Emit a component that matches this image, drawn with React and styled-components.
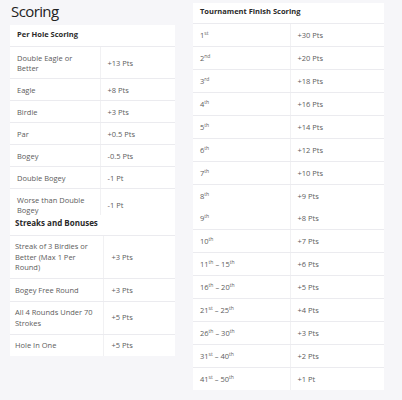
import styled, { createGlobalStyle } from "styled-components";

const GlobalStyle = createGlobalStyle`
  body {
    margin: 0;
    background-color: #f6f6f9;
    font-family: "Open Sans", "Liberation Sans", sans-serif;
    color: #5c5c5c;
  }
`;

const Page = styled.div`
  display: flex;
  align-items: flex-start;
  gap: 18px;
  padding: 3px 0 0 10px;
`;

const Column = styled.div`
  width: ${(props) => props.width}px;
  display: flex;
  flex-direction: column;
`;

const Title = styled.h2`
  margin: 0;
  height: 22px;
  padding-left: 1px;
  font-size: 15px;
  letter-spacing: -0.6px;
  line-height: 17px;
  font-weight: 500;
  color: #222;
`;

const Heading = styled.div`
  background-color: #fff;
  font-size: ${(props) => props.size || 7.5}px;
  font-weight: 700;
  color: #2a2a2a;
  padding: ${(props) => props.pad};
  line-height: 10px;
  border-bottom: 1px solid #ebebef;
`;

const Table = styled.table`
  width: 100%;
  border-collapse: collapse;
  background-color: #fff;
  font-size: 7.5px;
  line-height: ${(props) => props.lh}px;

  td {
    vertical-align: middle;
    border-bottom: 1px solid #ebebef;
  }
  td:first-child {
    width: ${(props) => props.first}px;
    padding: ${(props) => props.pad}px ${(props) => props.padx}px;
    border-right: 1px solid #f1f1f3;
    box-sizing: border-box;
  }
  td:last-child {
    padding: ${(props) => props.pad}px ${(props) => props.valx}px;
  }
  tr.open td {
    border-bottom: none;
  }
  tr.cut td {
    padding-bottom: 0;
  }
  tr:last-child td {
    border-bottom: none;
  }
  sup {
    font-size: 5px;
    line-height: 0;
    vertical-align: 3px;
  }
`;

const perHole = [
  ["Double Eagle or Better", "+13 Pts"],
  ["Eagle", "+8 Pts"],
  ["Birdie", "+3 Pts"],
  ["Par", "+0.5 Pts"],
  ["Bogey", "-0.5 Pts"],
  ["Double Bogey", "-1 Pt"],
  ["Worse than Double Bogey", "-1 Pt"],
];

const streaks = [
  ["Streak of 3 Birdies or Better (Max 1 Per Round)", "+3 Pts"],
  ["Bogey Free Round", "+3 Pts"],
  ["All 4 Rounds Under 70 Strokes", "+5 Pts"],
  ["Hole In One", "+5 Pts"],
];

const finish = [
  [[1, "st"]],
  [[2, "nd"]],
  [[3, "rd"]],
  [[4, "th"]],
  [[5, "th"]],
  [[6, "th"]],
  [[7, "th"]],
  [[8, "th"]],
  [[9, "th"]],
  [[10, "th"]],
  [[11, "th"], [15, "th"]],
  [[16, "th"], [20, "th"]],
  [[21, "st"], [25, "th"]],
  [[26, "th"], [30, "th"]],
  [[31, "st"], [40, "th"]],
  [[41, "st"], [50, "th"]],
];

const points = [30, 20, 18, 16, 14, 12, 10, 9, 8, 7, 6, 5, 4, 3, 2, 1];

function Place({ range }) {
  return range.map(([n, s], i) => (
    <span key={i}>
      {i > 0 && " – "}
      {n}
      <sup>{s}</sup>
    </span>
  ));
}

export default function App() {
  return (
    <>
      <GlobalStyle />
      <Page>
        <Column width={165}>
          <Title>Scoring</Title>
          <Heading pad="4px 7px 7px">Per Hole Scoring</Heading>
          <Table lh={10} first={90} pad={5.5} padx={7} valx={7}>
            <tbody>
              {perHole.map(([label, value], i) => (
                <tr key={i} className={i === perHole.length - 1 ? "open cut" : ""}>
                  <td>{label}</td>
                  <td>{value}</td>
                </tr>
              ))}
            </tbody>
          </Table>
          <Heading pad="3px 5px 7px" size={8}>
            Streaks and Bonuses
          </Heading>
          <Table lh={10.5} first={93} pad={5.5} padx={5} valx={8}>
            <tbody>
              {streaks.map(([label, value], i) => (
                <tr key={i}>
                  <td>{label}</td>
                  <td>{value}</td>
                </tr>
              ))}
            </tbody>
          </Table>
        </Column>
        <Column width={191}>
          <Heading pad="3px 7px 7px">Tournament Finish Scoring</Heading>
          <Table lh={10} first={97} pad={6} padx={7} valx={7}>
            <tbody>
              {finish.map((range, i) => (
                <tr key={i} className={i === 7 ? "open" : ""}>
                  <td>
                    <Place range={range} />
                  </td>
                  <td>
                    +{points[i]} {points[i] === 1 ? "Pt" : "Pts"}
                  </td>
                </tr>
              ))}
            </tbody>
          </Table>
        </Column>
      </Page>
    </>
  );
}
